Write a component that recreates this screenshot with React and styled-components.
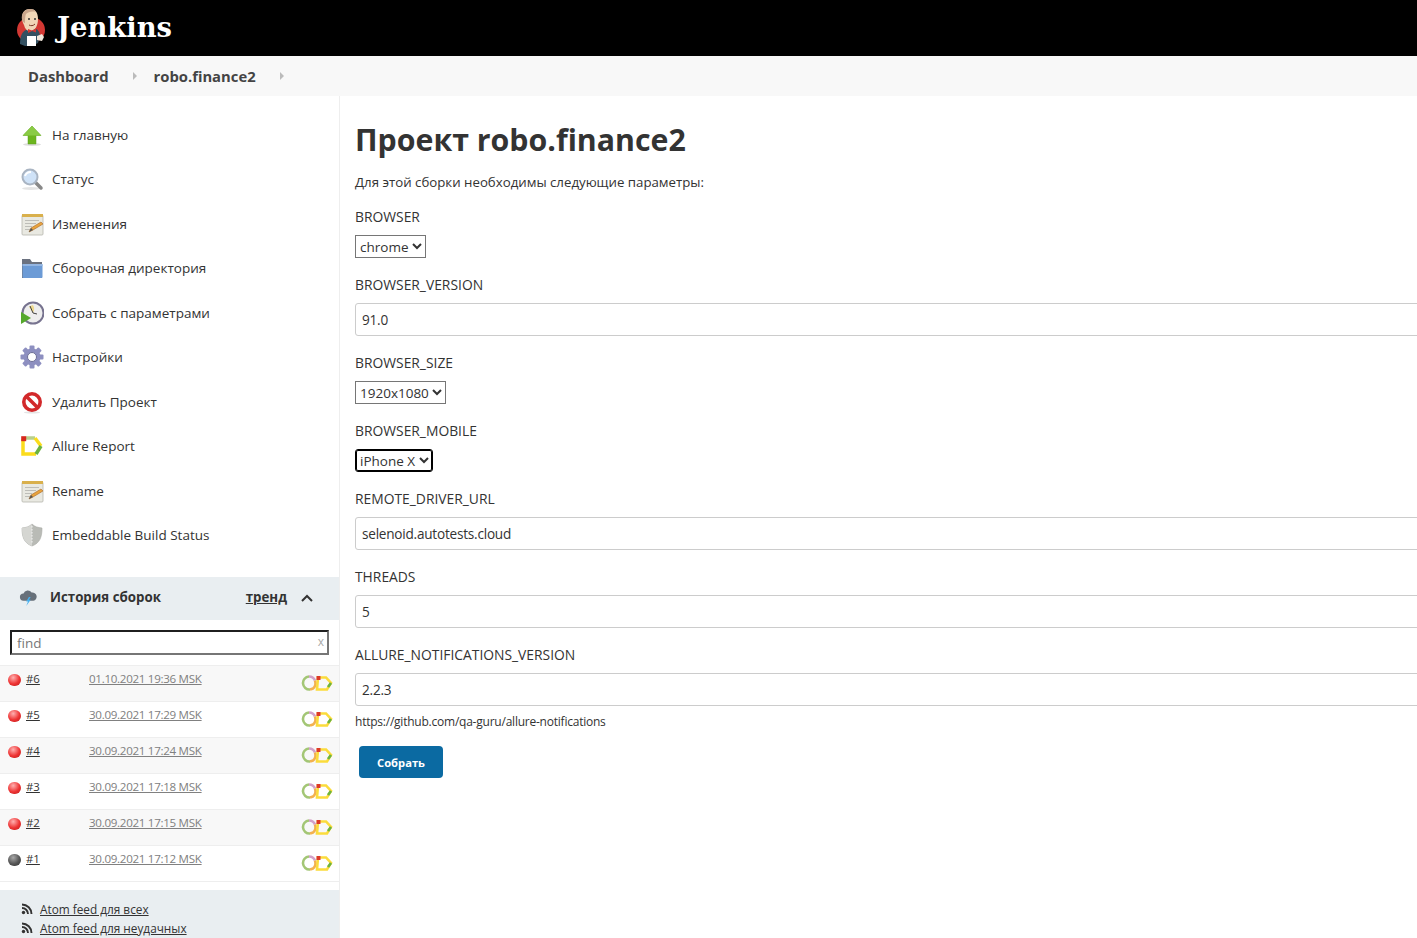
import React from "react";
import styled, { createGlobalStyle } from "styled-components";

const GlobalStyle = createGlobalStyle`
  html, body {
    margin: 0;
    padding: 0;
    height: 938px;
    overflow: hidden;
    background: #fff;
    font-family: "Open Sans", "Noto Sans", sans-serif;
    color: #333;
  }
`;

const Page = styled.div`
  width: 1417px;
  height: 938px;
  overflow: hidden;
  display: flex;
  flex-direction: column;
`;

const Header = styled.header`
  height: 56px;
  flex: none;
  background: #000;
  display: flex;
  align-items: center;
  padding-left: 15px;
  gap: 10px;
`;

const Brand = styled.span`
  font-family: "DejaVu Serif", "Liberation Serif", serif;
  font-weight: 700;
  font-size: 27.4px;
  margin-top: -2px;
  color: #fff;
`;

const Breadcrumbs = styled.nav`
  height: 40px;
  flex: none;
  background: #f8f8f8;
  display: flex;
  align-items: center;
  padding-left: 28px;
`;

const Crumb = styled.a`
  font-size: 14.8px;
  font-weight: 700;
  color: #444;
`;

const CrumbArrow = styled.span`
  width: 0;
  height: 0;
  margin: 0 17px 0 24px;
  border-left: 4px solid #bbb;
  border-top: 4px solid transparent;
  border-bottom: 4px solid transparent;
`;

const Body = styled.div`
  flex: 1;
  display: flex;
  min-height: 0;
`;

const Side = styled.aside`
  width: 339px;
  flex: none;
  border-right: 1px solid #eee;
  display: flex;
  flex-direction: column;
`;

const Tasks = styled.ul`
  list-style: none;
  margin: 16.4px 0 19.6px;
  padding: 0;
`;

const Task = styled.li`
  height: 44.5px;
  display: flex;
  align-items: center;
  gap: 8px;
  padding-left: 20px;
  font-size: 13.5px;
  color: #333;
`;

const TaskIcon = styled.svg`
  width: 24px;
  height: 24px;
  flex: none;
`;

const HistoryHead = styled.div`
  height: 43px;
  background: #e9eef1;
  display: flex;
  align-items: center;
  padding-left: 19px;
  font-size: 13.3px;
  font-weight: 700;
  color: #333;
`;

const HistoryTitle = styled.span`
  margin: -3px 0 0 13px;
  flex: 1;
`;

const TrendLink = styled.a`
  margin: -3px 13px 0 0;
  text-decoration: underline;
`;

const Chevron = styled.svg`
  width: 14px;
  height: 14px;
  margin-right: 25px;
`;

const SearchWrap = styled.div`
  position: relative;
  padding: 10px;
  height: 25px;
`;

const SearchInput = styled.input`
  width: 100%;
  height: 25px;
  box-sizing: border-box;
  border-style: solid;
  border-width: 2px;
  border-color: #1f1f1f #767676 #767676 #1f1f1f;
  padding: 1px 5px 0;
  font-family: inherit;
  font-size: 13.5px;
  color: #777;
  outline: none;
  &::placeholder {
    color: #777;
    opacity: 1;
  }
`;

const SearchClear = styled.span`
  position: absolute;
  right: 15px;
  top: 13px;
  font-size: 12px;
  color: #aaa;
`;

const Builds = styled.div`
  border-top: 1px solid #eee;
`;

const BuildRow = styled.div`
  height: 35px;
  border-bottom: 1px solid #eee;
  background: ${(p) => (p.$shaded ? "#f8f8f8" : "#fff")};
  display: grid;
  grid-template-columns: 26px 63px 1fr 38px;
  line-height: 16px;
`;

const BuildBall = styled.span`
  width: 12.5px;
  height: 12.5px;
  margin: 8px 0 0 8px;
  border-radius: 50%;
  background: ${(p) =>
    p.$failed
      ? "radial-gradient(circle at 40% 30%, #ffb0b0, #ee3333 55%, #b81c1c)"
      : "radial-gradient(circle at 40% 30%, #a8a8a8, #555 55%, #333)"};
`;

const BuildNumber = styled.a`
  margin-top: 5px;
  font-size: 11.4px;
  color: #333;
  text-decoration: underline;
`;

const BuildDate = styled.a`
  margin-top: 5px;
  font-size: 11.6px;
  letter-spacing: -0.3px;
  color: #808080;
  text-decoration: underline;
`;

const BuildBadge = styled.svg`
  width: 32px;
  height: 16px;
  margin-top: 9px;
`;

const Feeds = styled.div`
  margin-top: 8px;
  flex: 1;
  background: #e9eef1;
  padding: 10px 0 0 21px;
  display: flex;
  flex-direction: column;
  gap: 1px;
  font-size: 11.8px;
`;

const Feed = styled.a`
  display: flex;
  align-items: center;
  gap: 7px;
  height: 18px;
  color: #333;
  & span {
    text-decoration: underline;
  }
`;

const Main = styled.main`
  flex: 1;
  min-width: 0;
  overflow: hidden;
  padding: 24px 0 0 15px;
`;

const Title = styled.h1`
  margin: 0;
  font-size: 30.3px;
  line-height: 40px;
  font-weight: 700;
  color: #333;
`;

const Lead = styled.p`
  margin: 12px 0 15px;
  font-size: 13.25px;
  line-height: 20px;
`;

const Field = styled.div`
  margin-bottom: 17px;
`;

const Label = styled.div`
  font-size: 13.85px;
  line-height: 20px;
  margin-bottom: 8px;
  color: #333;
`;

const Select = styled.select`
  display: block;
  height: 23px;
  box-sizing: border-box;
  font-family: inherit;
  font-size: 13.5px;
  color: #333;
  background: #fff;
  padding: 0;
  border-radius: ${(p) => (p.$focused ? "3px" : "0")};
  border: 1px solid ${(p) => (p.$focused ? "#000" : "#767676")};
  box-shadow: ${(p) => (p.$focused ? "inset 0 0 0 1px #000" : "none")};
  outline: none;
`;

const TextInput = styled.input`
  display: block;
  width: calc(100% + 20px);
  height: 33px;
  box-sizing: border-box;
  border: 1px solid #ccc;
  border-radius: 3px;
  padding: 0 6px;
  font-family: inherit;
  font-size: 13.6px;
  letter-spacing: -0.23px;
  color: #333;
  outline: none;
`;

const Hint = styled.div`
  margin-top: -9px;
  font-size: 12px;
  letter-spacing: -0.23px;
  line-height: 16px;
`;

const Submit = styled.button`
  display: block;
  margin: 16px 0 0 4px;
  width: 84px;
  height: 32px;
  border: none;
  border-radius: 4px;
  background: #0b6aa2;
  color: #fff;
  font-family: inherit;
  font-size: 11.2px;
  font-weight: 700;
`;

function JenkinsLogo() {
  return (
    <svg width="32" height="40" viewBox="0 0 32 40">
      <ellipse cx="16" cy="22" rx="14" ry="13" fill="#d33833" />
      <path d="M5 36c0-8 2-13 8-15h8c3 1 4 5 4 8l-2 6-6 3H10z" fill="#335061" />
      <path d="M7 10C7 4 10 1 15 1s8 3 8 10c0 7-3 12-8 12-3 0-5-2-6-6-1-2-2-4-2-7z" fill="#f0d6b7" />
      <path d="M7 12C6 6 9 1 15 1c3 0 5 1 6 3-4-1-8 0-10 2-1 2-1 6-1 9-1 0-2-1-3-3z" fill="#c9a58b" />
      <circle cx="14" cy="11" r="1" fill="#333" />
      <circle cx="20" cy="11" r="1" fill="#333" />
      <path d="M14 17c2 1 4 1 6-1" stroke="#7a3a2a" strokeWidth="1" fill="none" />
      <path d="M13 21l4 1.500 4-2v4l-4-1.500-4 2z" fill="#d33833" />
      <rect x="12" y="28" width="9" height="10" fill="#fff" />
      <path d="M22 28l5-2 2 3-2 4-5-1z" fill="#f0e6da" />
    </svg>
  );
}

function HomeIcon() {
  return (
    <TaskIcon viewBox="0 0 24 24">
      <ellipse cx="12" cy="21.500" rx="9" ry="1.500" fill="#ddd" />
      <path d="M12 3l9 9.500h-5V21H8v-8.500H3z" fill="#6cb51f" stroke="#5a9c1a" strokeWidth=".5" />
      <path d="M12 3l9 9.500H3z" fill="#8acb45" />
    </TaskIcon>
  );
}

function StatusIcon() {
  return (
    <TaskIcon viewBox="0 0 24 24">
      <ellipse cx="11" cy="21.500" rx="9" ry="1.500" fill="#e4e4e4" />
      <path d="M14 14l7 7" stroke="#888" strokeWidth="3.500" strokeLinecap="round" />
      <circle cx="10" cy="10" r="7.500" fill="#cfe2f7" stroke="#a9b4c2" strokeWidth="2" />
      <path d="M5 9c1-3 3-4 6-4" stroke="#fff" strokeWidth="2" fill="none" />
    </TaskIcon>
  );
}

function NotepadIcon() {
  return (
    <TaskIcon viewBox="0 0 24 24">
      <rect x="2" y="3" width="21" height="20" rx="1" fill="#e9e9e2" stroke="#b5b5ad" strokeWidth=".8" />
      <rect x="2" y="2" width="21" height="3" fill="#d9b04c" />
      <path d="M5 8.500h14M5 11.500h11M5 14.500h7M5 17.500h5" stroke="#bdbdb8" strokeWidth="1" />
      <path d="M9 20l2-4 10-6 2 2-10 6z" fill="#e8a33d" stroke="#a8682a" strokeWidth=".6" />
      <path d="M9 20l2-4 2 2z" fill="#555" />
    </TaskIcon>
  );
}

function FolderIcon() {
  return (
    <TaskIcon viewBox="0 0 24 24">
      <path d="M2 3h8l2 3h10v16H2z" fill="#6b7280" />
      <rect x="2.500" y="8" width="20" height="14" rx="1" fill="#6c9bd6" />
      <rect x="2.500" y="8" width="20" height="2" fill="#94b6e2" />
    </TaskIcon>
  );
}

function BuildIcon() {
  return (
    <TaskIcon viewBox="0 0 24 24">
      <circle cx="13" cy="12" r="10.500" fill="#eee" stroke="#77738f" strokeWidth="2" />
      <path d="M13 4a8 8 0 0 1 0 8l-4-6a8 8 0 0 1 4-2z" fill="#eed98f" />
      <path d="M13 12l-3-7M13 12l4 1" stroke="#444" strokeWidth="1" />
      <path d="M1 11l10 6-10 6z" fill="#55a82c" />
    </TaskIcon>
  );
}

function GearIcon() {
  return (
    <TaskIcon viewBox="0 0 24 24">
      <g fill="#8d8fc0">
        <circle cx="12" cy="12" r="8.500" />
        {[0, 45, 90, 135, 180, 225, 270, 315].map((a) => (
          <rect key={a} x="9.500" y="0.500" width="5" height="6" rx="1" transform={`rotate(${a} 12 12)`} />
        ))}
      </g>
      <circle cx="12" cy="12" r="4.500" fill="#fff" stroke="#6d6f96" strokeWidth="1" />
    </TaskIcon>
  );
}

function DeleteIcon() {
  return (
    <TaskIcon viewBox="0 0 24 24">
      <ellipse cx="12" cy="22.500" rx="8" ry="1" fill="#e4e4e4" />
      <circle cx="12" cy="12" r="8.200" fill="#fff" stroke="#d2292b" strokeWidth="3.600" />
      <path d="M6 6l12 12" stroke="#d2292b" strokeWidth="3.600" />
    </TaskIcon>
  );
}

function AllureIcon() {
  return (
    <TaskIcon viewBox="0 0 24 24">
      <g fill="none" strokeWidth="3.500" strokeLinejoin="miter">
        <path d="M3 5v15h13" stroke="#fbdc1c" />
        <path d="M6 4h9" stroke="#b8d08c" />
        <path d="M15 4l6 8" stroke="#fbdc1c" />
        <path d="M21 12l-5 8" stroke="#6cb33f" />
      </g>
      <rect x="1.200" y="2.200" width="5" height="5" fill="#d6271c" />
    </TaskIcon>
  );
}

function ShieldIcon() {
  return (
    <TaskIcon viewBox="0 0 24 24">
      <path d="M12 1c3 3 6 3.500 10 4 0 9-2 15-10 18C4 20 2 14 2 5c4-.5 7-1 10-4z" fill="#b9bbb6" stroke="#a7a9a4" strokeWidth=".6" />
      <path d="M12 1c-3 3-6 3.500-10 4 0 9 2 15 10 18z" fill="#d5d6d2" />
      <path d="M12 3v18" stroke="#f4f4f4" strokeWidth="1" strokeDasharray="1.500 1.500" />
    </TaskIcon>
  );
}

function CloudIcon() {
  return (
    <svg width="18" height="18" viewBox="0 0 20 20">
      <path d="M5 13a4 4 0 0 1 0-8 5 5 0 0 1 9-1 4.500 4.500 0 0 1 2 9z" fill="#67707a" />
      <path d="M11 9l-3 5h2l-2 5 5-7h-2l2-3z" fill="#46b0ef" />
    </svg>
  );
}

function AllureBadge() {
  return (
    <BuildBadge viewBox="0 0 32 16">
      <g fill="none" strokeWidth="2.600">
        <path d="M9 14.500a6.500 6.500 0 0 1-1-13" stroke="#a3c675" />
        <path d="M8 1.500a6.500 6.500 0 0 1 6 4" stroke="#d3a0c8" />
        <path d="M14 5.500c1 3 .5 6-2 8l-3 1" stroke="#f3b14f" />
        <path d="M17 2.500h8l5 5.500-4 6.500H16z" stroke="#fbdc3c" />
        <path d="M27 12l3-4" stroke="#6cb33f" />
      </g>
      <rect x="15.500" y="1" width="4" height="4" fill="#dd3a26" />
    </BuildBadge>
  );
}

function FeedIcon() {
  return (
    <svg width="12" height="12" viewBox="0 0 12 12">
      <circle cx="2.500" cy="9.500" r="1.700" fill="#333" />
      <path d="M1 5a6 6 0 0 1 6 6M1 1.500A9.500 9.500 0 0 1 10.500 11" stroke="#333" strokeWidth="1.900" fill="none" />
    </svg>
  );
}

const tasks = [
  ["На главную", HomeIcon],
  ["Статус", StatusIcon],
  ["Изменения", NotepadIcon],
  ["Сборочная директория", FolderIcon],
  ["Собрать с параметрами", BuildIcon],
  ["Настройки", GearIcon],
  ["Удалить Проект", DeleteIcon],
  ["Allure Report", AllureIcon],
  ["Rename", NotepadIcon],
  ["Embeddable Build Status", ShieldIcon],
];

const builds = [
  ["#6", "01.10.2021 19:36 MSK", true],
  ["#5", "30.09.2021 17:29 MSK", true],
  ["#4", "30.09.2021 17:24 MSK", true],
  ["#3", "30.09.2021 17:18 MSK", true],
  ["#2", "30.09.2021 17:15 MSK", true],
  ["#1", "30.09.2021 17:12 MSK", false],
];

export default function App() {
  return (
    <Page>
      <GlobalStyle />
      <Header>
        <JenkinsLogo />
        <Brand>Jenkins</Brand>
      </Header>
      <Breadcrumbs>
        <Crumb>Dashboard</Crumb>
        <CrumbArrow />
        <Crumb>robo.finance2</Crumb>
        <CrumbArrow />
      </Breadcrumbs>
      <Body>
        <Side>
          <Tasks>
            {tasks.map(([name, Icon]) => (
              <Task key={name}>
                <Icon />
                {name}
              </Task>
            ))}
          </Tasks>
          <HistoryHead>
            <CloudIcon />
            <HistoryTitle>История сборок</HistoryTitle>
            <TrendLink>тренд</TrendLink>
            <Chevron viewBox="0 0 14 14">
              <path d="M2 10l5-5 5 5" stroke="#333" strokeWidth="2" fill="none" />
            </Chevron>
          </HistoryHead>
          <SearchWrap>
            <SearchInput placeholder="find" />
            <SearchClear>x</SearchClear>
          </SearchWrap>
          <Builds>
            {builds.map(([num, date, failed], i) => (
              <BuildRow key={num} $shaded={i % 2 === 0}>
                <BuildBall $failed={failed} />
                <BuildNumber>{num}</BuildNumber>
                <BuildDate>{date}</BuildDate>
                <AllureBadge />
              </BuildRow>
            ))}
          </Builds>
          <Feeds>
            <Feed>
              <FeedIcon />
              <span>Atom feed для всех</span>
            </Feed>
            <Feed>
              <FeedIcon />
              <span>Atom feed для неудачных</span>
            </Feed>
          </Feeds>
        </Side>
        <Main>
          <Title>Проект robo.finance2</Title>
          <Lead>Для этой сборки необходимы следующие параметры:</Lead>
          <Field>
            <Label>BROWSER</Label>
            <Select defaultValue="chrome">
              <option>chrome</option>
            </Select>
          </Field>
          <Field>
            <Label>BROWSER_VERSION</Label>
            <TextInput defaultValue="91.0" />
          </Field>
          <Field>
            <Label>BROWSER_SIZE</Label>
            <Select defaultValue="1920x1080">
              <option>1920x1080</option>
            </Select>
          </Field>
          <Field>
            <Label>BROWSER_MOBILE</Label>
            <Select $focused defaultValue="iPhone X">
              <option>iPhone X</option>
            </Select>
          </Field>
          <Field>
            <Label>REMOTE_DRIVER_URL</Label>
            <TextInput defaultValue="selenoid.autotests.cloud" />
          </Field>
          <Field>
            <Label>THREADS</Label>
            <TextInput defaultValue="5" />
          </Field>
          <Field>
            <Label>ALLURE_NOTIFICATIONS_VERSION</Label>
            <TextInput defaultValue="2.2.3" />
          </Field>
          <Hint>https://github.com/qa-guru/allure-notifications</Hint>
          <Submit>Собрать</Submit>
        </Main>
      </Body>
    </Page>
  );
}
